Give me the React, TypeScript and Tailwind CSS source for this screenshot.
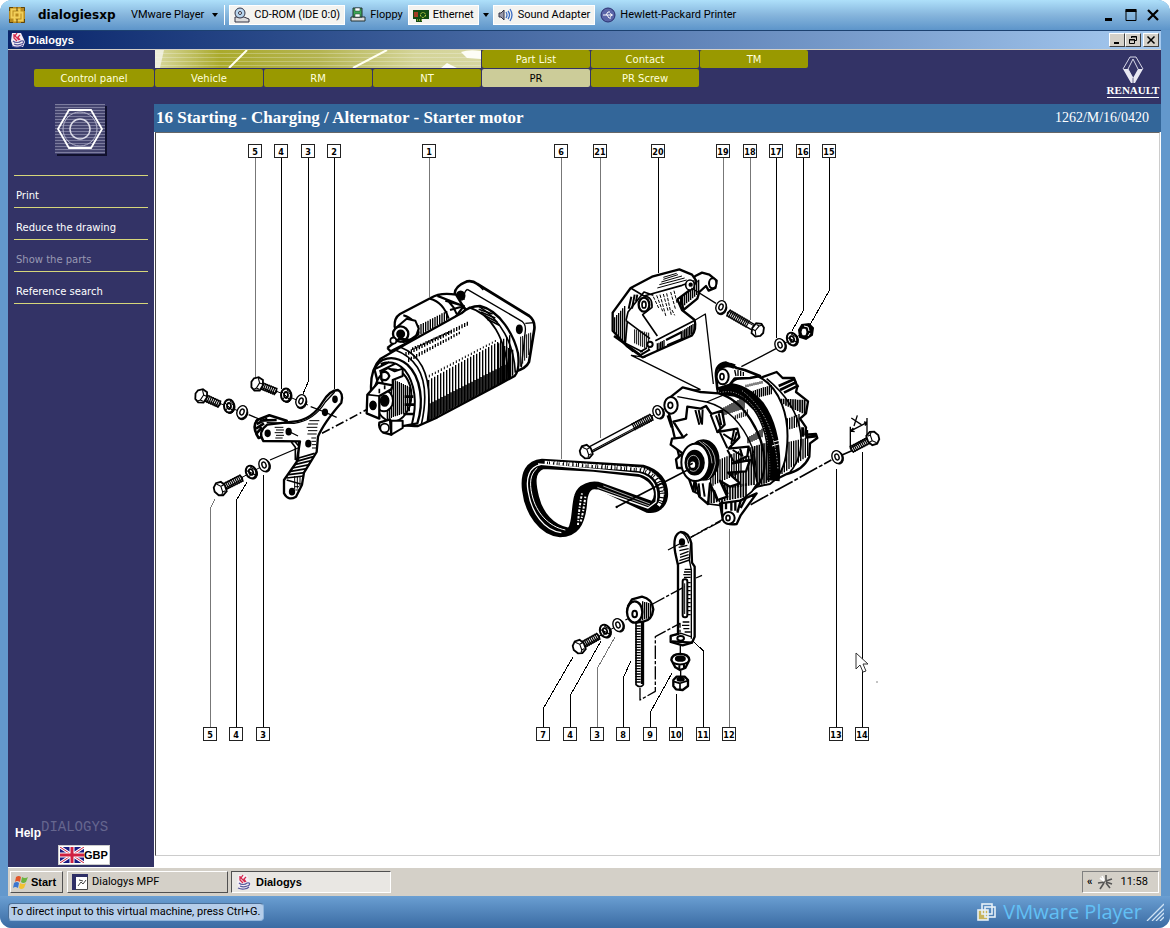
import type { ReactNode } from 'react'

const tahoma = "font-['Roboto',sans-serif] text-[11px] leading-4"
const tahomaBold = "font-['Liberation_Sans',sans-serif] text-[11px] leading-4 font-bold"
const verdana = "font-['DejaVu_Sans',sans-serif] text-[10px] leading-4"

type Callout = { n: number; x: number; line: string; soft?: boolean }

const topCallouts: Callout[] = [
  { n: 5, x: 255, line: 'V380', soft: true },
  { n: 4, x: 281, line: 'V389' },
  { n: 3, x: 308, line: 'V381L303 394' },
  { n: 2, x: 334, line: 'V389' },
  { n: 1, x: 429, line: 'V297', soft: true },
  { n: 6, x: 561, line: 'V459', soft: true },
  { n: 21, x: 600, line: 'V438', soft: true },
  { n: 20, x: 658, line: 'V273' },
  { n: 19, x: 723, line: 'V300', soft: true },
  { n: 18, x: 750, line: 'V320', soft: true },
  { n: 17, x: 776, line: 'V338' },
  { n: 16, x: 803, line: 'V310L792 331' },
  { n: 15, x: 829, line: 'V290L810 325' },
]

const bottomCallouts: Callout[] = [
  { n: 5, x: 210, line: 'V508L215 499', soft: true },
  { n: 4, x: 236, line: 'V500L247 482' },
  { n: 3, x: 263, line: 'V475' },
  { n: 7, x: 543, line: 'V708L573 657' },
  { n: 4, x: 570, line: 'V695L601 641' },
  { n: 3, x: 597, line: 'V668L615 637', soft: true },
  { n: 8, x: 623, line: 'V677L631 661' },
  { n: 9, x: 650, line: 'V712L672 673' },
  { n: 10, x: 676, line: 'V694' },
  { n: 11, x: 703, line: 'V651L693 641' },
  { n: 12, x: 729, line: 'V529', soft: true },
  { n: 13, x: 836, line: 'V469' },
  { n: 14, x: 862, line: 'V452' },
]

// vertical shading strokes between two sloping edges
function hatch(x0: number, x1: number, step: number, a: [number, number], b: [number, number]) {
  let d = ''
  for (let x = x0; x <= x1; x += step) {
    const t = (x - x0) / (x1 - x0)
    d += `M${x} ${Math.round(a[0] + (a[1] - a[0]) * t)}V${Math.round(b[0] + (b[1] - b[0]) * t)}`
  }
  return d
}

function Callouts({ items, y, from }: { items: Callout[]; y: number; from: number }) {
  return (
    <g>
      {items.map(c => (
        <g key={c.x}>
          <path d={`M${c.x + 0.5} ${from}${c.line}`} stroke={c.soft ? '#777' : '#000'} strokeWidth="1" fill="none" shapeRendering="crispEdges" />
          <rect x={c.x - 6.5} y={y - 6.5} width="13" height="13" fill="#fff" stroke="#222" />
          <text x={c.x} y={y + 4} textAnchor="middle" className="font-['DejaVu_Sans_Condensed',sans-serif] text-[9px] font-bold" fill="#000" stroke="none">{c.n}</text>
        </g>
      ))}
    </g>
  )
}

function Bolt({ x, y, a, len, thread = len }: { x: number; y: number; a: number; len: number; thread?: number }) {
  return (
    <g transform={`translate(${x} ${y}) rotate(${a})`} fill="#fff" stroke="#000">
      <path d={`M3 -3H${len}l1 3l-1 3H3z`} strokeWidth="1.4" />
      <path d={hatch(len - thread + 6, len, 2, [-4, -4], [4, 4])} strokeWidth="1.2" />
      <path d={`M4 1.6H${len}`} strokeWidth="1" />
      <path d="M-5 -4L-1 -7L4 -6L6 -1L5 5L0 7L-4 5L-6 0z" strokeWidth="1.8" />
      <path d="M-1 -6L2 -2L1 4L-1 6M2 -2L5 -2M1 4L4 4" strokeWidth="1.1" fill="none" />
    </g>
  )
}

function Washer({ x, y, lock, a = 0 }: { x: number; y: number; lock?: boolean; a?: number }) {
  return (
    <g transform={`translate(${x} ${y}) rotate(${a})`} stroke="#000" fill="#fff">
      <ellipse cx="1" cy="1" rx="5" ry="6.5" fill="#000" strokeWidth="1" />
      <ellipse rx="5" ry="6.5" strokeWidth={lock ? 2 : 1.4} />
      <ellipse rx="2" ry="3" strokeWidth={lock ? 1.8 : 1.4} />
      {lock && <path d="M-4 -3L3 4M-3 4L0 0M1 -5L4 -1" strokeWidth="1" />}
    </g>
  )
}

function Starter() {
  return (
    <g transform="translate(350 270) scale(.33333)" stroke="#000" fill="#fff" strokeWidth="5" strokeLinejoin="round">
      {/* mounting flange */}
      <path d="M316 84C308 60 322 46 352 34Q368 31 382 42L538 138Q556 152 553 178L537 276Q528 296 496 304L420 200z" strokeWidth="8" />
      <path d="M352 58L516 154Q528 164 526 182L514 292M352 58Q340 66 342 90M382 42L400 60M526 160L552 158" fill="none" strokeWidth="4" />
      <path d={hatch(512, 546, 6, [200, 186], [290, 240])} strokeWidth="3" />
      <ellipse cx="332" cy="77" rx="12" ry="13" fill="#000" />
      <ellipse cx="508" cy="178" rx="8" ry="12" fill="#000" />
      {/* solenoid */}
      <path d="M134 170Q132 144 150 132L242 84Q270 66 318 74L340 110L310 150L190 214L150 214z" strokeWidth="7" />
      <path d="M240 86Q280 96 296 146M262 78Q306 90 320 132M160 136Q198 146 206 190M264 78L330 104M286 92L342 108L300 120" fill="none" strokeWidth="6" />
      <path d={hatch(206, 292, 7, [166, 122], [196, 150])} strokeWidth="4" />
      <path d="M140 172L170 146L196 152L206 176L196 204L160 216z" strokeWidth="6" />
      <circle cx="152" cy="192" r="23" strokeWidth="7" />
      <circle cx="152" cy="192" r="11" fill="#000" />
      <path d="M112 234L148 206L180 210L206 192M112 234l10 10l50 -26" strokeWidth="7" fill="none" />
      <circle cx="130" cy="212" r="9" />
      {/* yoke */}
      <path d="M64 372C60 330 68 290 92 266L168 222L334 130Q356 108 390 108C450 122 492 196 504 250Q510 300 494 318L450 342L262 442L204 468Q150 470 130 450z" strokeWidth="7" />
      <path d="M152 232C222 260 250 330 232 456M136 240C210 268 242 340 214 464M356 112C420 130 470 200 476 326M388 110C452 150 492 220 496 308" fill="none" strokeWidth="5" />
      <path d={hatch(236, 486, 9, [330, 192], [452, 322])} strokeWidth="4" />
      <path d={hatch(240, 480, 9, [400, 276], [450, 324])} strokeWidth="5" />
      <path d={hatch(446, 490, 6, [220, 240], [344, 316])} strokeWidth="4" />
      <path d={hatch(168, 358, 8, [246, 152], [258, 164])} strokeWidth="4" />
      <path d={hatch(176, 330, 8, [264, 184], [276, 192])} strokeWidth="4" />
      <path d={hatch(188, 300, 8, [232, 182], [240, 188])} strokeWidth="4" />
      <path d={hatch(238, 440, 9, [314, 208], [322, 214])} strokeWidth="3" />
      <path d="M386 118l42 14M392 126l44 18M402 136l40 20M412 148l36 18" strokeWidth="5" />
      {/* drive end */}
      <path d="M74 300C84 264 130 250 172 284C214 322 222 400 202 460L150 470L112 450z" strokeWidth="7" />
      <path d="M92 282Q130 266 164 300C196 340 202 400 186 462M78 296l40 -20M88 304l50 -24" fill="none" strokeWidth="6" />
      <ellipse cx="128" cy="376" rx="56" ry="78" strokeWidth="6" />
      <path d={hatch(112, 178, 6, [320, 350], [448, 424])} strokeWidth="4" />
      <path d="M92 308l22 -14l20 10l24 -8v22l-30 12v22l-30 -10z" strokeWidth="6" />
      <path d="M94 308Q112 300 118 318Q112 336 94 328z" strokeWidth="7" />
      <ellipse cx="102" cy="392" rx="27" ry="32" strokeWidth="6" />
      <ellipse cx="104" cy="392" rx="12" ry="16" fill="#000" />
      <path d="M52 374L84 338L128 346L124 358L88 378V446L50 430z" strokeWidth="7" />
      <path d="M52 374L88 378M88 356v14M104 346v12" strokeWidth="5" />
      <ellipse cx="69" cy="406" rx="9" ry="12" fill="#000" />
      <path d="M88 458L120 448L124 494L100 488Q84 474 88 458z" strokeWidth="7" />
      <path d="M124 452h34v22l-34 20z" strokeWidth="6" />
      <circle cx="104" cy="474" r="13" strokeWidth="5" />
      <path d="M164 380h26M164 404h28M160 432h30" strokeWidth="8" />
    </g>
  )
}

function Bracket() {
  return (
    <g transform="translate(180 370) scale(.33333)" stroke="#000" fill="#fff" strokeWidth="5" strokeLinejoin="round">
      <path d="M236 204Q214 170 232 150L268 136L320 152L300 180z" strokeWidth="8" />
      <path d="M230 162L262 146M228 176L252 160M230 190L246 172M240 152L290 150" strokeWidth="8" />
      <path d="M334 216L346 232V270M346 216l10 12v40" strokeWidth="5" fill="none" />
      <path d="M250 213Q232 186 262 164L340 155Q396 150 428 96Q450 60 474 60Q492 70 484 98Q430 160 414 200L410 246L372 308L366 344L348 380Q324 394 312 370V330L350 276L360 214z" strokeWidth="7" />
      <path d="M260 158L342 160Q402 152 436 96L464 66M356 214V270M320 330L362 342" strokeWidth="4" fill="none" />
      <path d="M356 264L404 250M350 274L400 260M344 284L394 272M338 294L388 284M332 304L380 296M326 314L374 308M320 324L370 318" strokeWidth="5" fill="none" />
      <path d="M284 172h26M288 180h24M284 188h26M288 196h24M286 204h22M388 152h30M384 162h30M380 172h32M384 182h28M382 192h28M394 204h14M394 214h14M396 224h12M396 234h12M344 350h14M346 360h12" strokeWidth="3" />
      <path d="M344 318v40M352 320v36M360 320v28" strokeWidth="3" />
      <g fill="#000">
        <ellipse cx="263" cy="190" rx="7" ry="9" />
        <ellipse cx="326" cy="185" rx="7" ry="9" />
        <ellipse cx="385" cy="221" rx="7" ry="9" />
        <ellipse cx="465" cy="88" rx="6" ry="9" />
        <ellipse cx="435" cy="127" rx="7" ry="9" />
        <ellipse cx="336" cy="365" rx="7" ry="9" />
      </g>
      <path d="M392 110l42 16l36 16M330 186l24 12M206 134l34 14M270 270l84 -36" strokeWidth="4" fill="none" />
      <path d="M426 190L562 118" strokeWidth="5" strokeDasharray="26 8 5 8" />
    </g>
  )
}

function Belt() {
  return (
    <g transform="translate(510 400) scale(.33333)" stroke="#000" fill="none" strokeLinejoin="round">
      <path d="M96 180C50 184 34 220 40 270C48 340 90 402 150 408C196 408 224 380 228 300C232 270 244 256 270 268L410 334C440 340 466 322 470 290C474 240 444 210 400 198Z" fill="#000" strokeWidth="8" />
      <path d="M100 204C70 216 74 250 84 290C96 340 130 378 176 386C190 370 186 320 196 286C204 256 244 240 276 252L426 306C446 280 430 244 390 228L250 212Z" fill="#fff" strokeWidth="6" />
      <path d="M92 194C56 200 48 236 54 272C64 340 104 392 154 398" stroke="#fff" strokeWidth="4" />
      <path d="M82 204C60 222 58 250 66 284C78 338 116 380 166 390" stroke="#fff" strokeWidth="3" />
      <path d="M84 192L386 220C428 230 446 262 438 306L414 324L262 270" stroke="#fff" strokeWidth="4" />
      <path d="M262 262L418 318M280 258L420 312" stroke="#fff" strokeWidth="2" />
      <path d="M104 188L390 208Q450 222 456 280Q456 304 444 318" stroke="#fff" strokeWidth="11" strokeDasharray="7 3 3 3 9 4" />
      <path d="M110 184L400 204Q460 226 462 284" stroke="#fff" strokeWidth="3" strokeDasharray="3 6 5 4" />
      <path d="M216 280Q206 330 204 376M226 290Q220 336 212 366" stroke="#fff" strokeWidth="6" strokeDasharray="4 5 7 4" />
      <path d="M318 322L540 206" strokeWidth="5" />
      <circle cx="320" cy="321" r="3" fill="#000" />
    </g>
  )
}

function Cover() {
  return (
    <g transform="translate(600 260) scale(.33333)" stroke="#000" fill="#fff" strokeWidth="5" strokeLinejoin="round">
      <path d="M240 100L286 48L306 38L328 44L350 62L346 84L326 92L318 78L298 96L292 116L250 150z" strokeWidth="7" />
      <ellipse cx="338" cy="70" rx="11" ry="15" strokeWidth="6" />
      <path d={hatch(242, 300, 6, [104, 56], [146, 96])} strokeWidth="4" />
      <path d="M38 212V158L92 84L156 50L238 28L276 44L290 64L270 90L232 118L246 150L284 180Q290 208 276 226L164 276L128 292L80 258z" strokeWidth="7" />
      <path d="M92 84L132 108L246 76L284 62M78 182L84 156L132 96L160 106M78 182L150 236M132 108Q158 110 156 142L128 164L172 228M82 182L76 250L128 276M166 242L282 182" fill="none" strokeWidth="5" />
      <path d={hatch(44, 76, 6, [172, 136], [222, 252])} strokeWidth="4" />
      <path d={hatch(104, 146, 6, [208, 218], [250, 270])} strokeWidth="3" />
      <path d="M190 58l44 -14M184 66l62 -18M178 74l76 -20M172 84l88 -24M190 52l40 -12" strokeWidth="3" />
      <path d="M160 110l16 34M170 106l18 48M180 104l18 66M190 102l14 50M200 100l14 66M212 96l14 50M222 92l10 40M216 150l8 16" strokeWidth="3" strokeDasharray="10 4" />
      <path d="M94 110l-8 36M104 104l-8 42M112 104l-4 20" strokeWidth="6" />
      <ellipse cx="132" cy="134" rx="16" ry="21" strokeWidth="7" />
      <ellipse cx="132" cy="134" rx="6" ry="10" />
      <ellipse cx="270" cy="75" rx="13" ry="15" strokeWidth="5" />
      <circle cx="272" cy="74" r="4" fill="#000" />
      <circle cx="150" cy="253" r="8" strokeWidth="6" />
      <path d={hatch(172, 192, 5, [250, 240], [272, 262])} strokeWidth="4" />
      <path d={hatch(244, 282, 5, [214, 190], [240, 218])} strokeWidth="4" />
      <path d="M198 240L246 216M202 256L250 236M42 228L120 284M50 228L100 274" strokeWidth="7" />
      <path d="M120 276l20 -12M120 286l30 -18" strokeWidth="6" />
      {/* leader lines down to the alternator */}
      <path d="M286 180L316 162L340 372M136 292L94 286L300 388L270 392M274 84L348 130M424 320L528 266" fill="none" strokeWidth="4" />
    </g>
  )
}

function Alternator() {
  return (
    <g transform="translate(640 350) scale(.33333)" stroke="#000" fill="#fff" strokeWidth="5" strokeLinejoin="round">
      {/* rear cover */}
      <path d="M360 84L410 66L428 84L462 84L472 110L468 126L504 154L498 190L480 206L498 232L496 254L528 252L532 264L510 280L508 320Q490 360 440 372L380 402L330 240z" strokeWidth="7" />
      <path d="M416 108l46 -20M420 120l50 -24M432 128l44 -22" strokeWidth="8" />
      <path d={hatch(424, 500, 7, [146, 150], [160, 196])} strokeWidth="5" />
      <path d={hatch(414, 482, 7, [216, 190], [248, 228])} strokeWidth="4" />
      <path d={hatch(426, 506, 7, [280, 262], [372, 316])} strokeWidth="4" />
      <path d="M488 232v28M500 240v24M496 262l34 -4" strokeWidth="9" />
      <path d="M380 86Q470 160 482 250Q490 320 450 366" fill="none" strokeWidth="5" />
      {/* stator */}
      <path d="M232 118L300 82L352 78C420 110 452 200 440 300Q434 370 390 402L350 410L250 300z" strokeWidth="6" />
      <path d={hatch(316, 396, 6, [130, 104], [152, 132])} strokeWidth="4" />
      <path d={hatch(318, 370, 6, [104, 92], [112, 100])} strokeWidth="3" />
      <path d="M236 122Q300 104 356 170Q412 250 400 392" fill="none" strokeWidth="38" />
      <path d="M240 128Q296 112 346 178Q396 256 388 390" fill="none" stroke="#fff" strokeWidth="2" strokeDasharray="3 5" />
      <path d="M306 122Q404 196 414 360" fill="none" stroke="#fff" strokeWidth="2" strokeDasharray="4 5" />
      <path d="M396 288l26 -8M400 276l28 -8" stroke="#fff" strokeWidth="3" />
      {/* front bracket */}
      <path d="M78 152L128 112L182 126L236 130C310 150 372 250 374 340Q372 396 340 418L300 452L240 456L120 330z" strokeWidth="7" />
      <path d="M112 140L200 156Q290 180 336 290Q350 330 350 400M200 156L262 130" fill="none" strokeWidth="4" />
      <path d={hatch(252, 312, 6, [172, 140], [196, 176])} strokeWidth="4" />
      <path d={hatch(286, 326, 6, [196, 176], [208, 196])} strokeWidth="3" />
      <path d={hatch(324, 366, 6, [262, 236], [280, 262])} strokeWidth="4" />
      <path d={hatch(330, 386, 7, [292, 276], [416, 396])} strokeWidth="5" />
      <ellipse cx="93" cy="166" rx="20" ry="25" strokeWidth="6" />
      <ellipse cx="91" cy="166" rx="7" ry="9" />
      <path d="M84 196L96 232" strokeWidth="9" />
      {/* top ear */}
      <path d="M228 78Q226 42 258 38L290 54L314 60L360 78L330 84L284 86L270 104L232 116z" strokeWidth="8" />
      <path d="M234 58Q256 36 284 50" strokeWidth="14" fill="none" />
      <ellipse cx="248" cy="80" rx="18" ry="23" strokeWidth="6" />
      <ellipse cx="246" cy="80" rx="6" ry="9" />
      <path d="M284 60l4 18M294 60v18M302 62v16M310 66v12" strokeWidth="4" />
      {/* fan */}
      <path d="M150 390L160 424L190 440L206 462L240 466L300 454L336 424L352 400L330 300L200 330z" strokeWidth="5" />
      <path d={hatch(166, 348, 8, [370, 310], [430, 404])} strokeWidth="5" />
      <path d={hatch(206, 320, 8, [410, 400], [462, 440])} strokeWidth="5" />
      <path d="M100 215L138 206L142 170L182 176L198 168L214 192L246 182L254 224L232 246L292 236L298 262L266 296L326 290L322 318L278 340L330 330L318 364L264 368L300 400L270 410L240 392L262 440L232 450L210 400L204 462L178 440L164 388L160 424L136 354L112 354L108 328L128 310L92 284L96 266L130 262z" strokeWidth="7" />
      <path d="M166 180l12 44M176 180l8 40M188 178l-2 46M228 196l14 40M236 190l8 36M212 194l20 52M250 252l30 20M240 248l22 46M282 240l-8 42M290 246l-8 30M278 300l30 18M300 296l8 24M130 262l12 -10M262 300l20 36M176 400l4 38M188 400l6 40M222 420l10 26M244 398l20 34" strokeWidth="6" />
      <path d={hatch(212, 306, 7, [340, 300], [410, 366])} strokeWidth="4" />
      {/* pulley */}
      <ellipse cx="190" cy="330" rx="46" ry="60" fill="#000" />
      <path d="M188 276Q226 296 226 340Q220 372 204 388M178 274Q214 296 216 340" fill="none" stroke="#fff" strokeWidth="2" />
      <ellipse cx="166" cy="337" rx="42" ry="56" strokeWidth="6" />
      <ellipse cx="164" cy="338" rx="28" ry="36" strokeWidth="5" fill="#000" />
      <ellipse cx="160" cy="340" rx="18" ry="24" fill="none" stroke="#fff" strokeWidth="2" />
      <ellipse cx="158" cy="344" rx="10" ry="12" />
      {/* lower lug */}
      <path d="M240 460L248 506Q260 528 290 522L302 496L350 430L300 452z" strokeWidth="7" />
      <path d="M246 452v38M258 458v20M274 456v26M286 454v28M302 452l-10 36M320 440l-18 34" strokeWidth="7" />
      <ellipse cx="266" cy="504" rx="18" ry="18" strokeWidth="6" />
      <ellipse cx="264" cy="504" rx="6" ry="8" />
      <path d="M150 344L158 340" strokeWidth="5" />
      <path d="M332 464L574 330M594 320L650 296" strokeWidth="5" strokeDasharray="60 6 12 6" fill="none" />
      <path d="M248 508L152 562" strokeWidth="4" strokeDasharray="26 8 6 8" />
      {/* dimension arrow */}
      <path d="M631 230V296M681 204V262M634 242L680 218M640 234l-8 9l12 2M672 216l9 2l-6 9M634 204l30 20M652 196l-10 32" fill="none" strokeWidth="4" />
    </g>
  )
}

function Tensioner() {
  return (
    <g transform="translate(520 520) scale(.33333)" stroke="#000" fill="#fff" strokeWidth="5" strokeLinejoin="round">
      <path d="M466 100Q456 44 482 36Q506 36 514 70L516 128L524 140V350L516 368L488 376L452 366V348L474 342V136z" strokeWidth="7" />
      <path d="M474 132L508 120L512 70M508 120L514 150V356M452 348L484 340L512 350M482 36Q500 44 506 70" fill="none" strokeWidth="4" />
      <path d="M480 104l26 -10M480 112l26 -8M478 122l30 -10M476 82l26 -6M478 92l28 -6M494 148h20M492 156h20M490 164h22M492 172h20M504 188h8M504 200h8M504 212h8M504 224h8M504 236h8M504 248h8M504 260h8M504 272h8M504 284h8M488 306h20M486 316h22M490 326h18M494 336h18" strokeWidth="4" />
      <rect x="488" y="178" width="14" height="114" rx="6" strokeWidth="6" />
      <path d="M494 190v92" strokeWidth="3" />
      <ellipse cx="486" cy="66" rx="7" ry="9" fill="#000" />
      <ellipse cx="482" cy="355" rx="10" ry="7" strokeWidth="6" />
      <path d="M456 364l60 4" strokeWidth="7" />
      <path d="M444 90L478 72M512 52L606 2M316 300L346 286M398 252L494 200M528 174L546 166M360 504V540L406 514V350L480 310V338" fill="none" strokeWidth="4" strokeDasharray="40 6 10 6" />
      {/* eye bolt */}
      <path d="M348 300h22v194q-10 12 -22 0z" strokeWidth="5" />
      <path d="M348 318h14M346 326h16M346 334h16M346 342h16M346 350h16M346 358h16M346 366h16M346 374h16M346 382h16M346 390h16M346 398h16M346 406h16M346 414h16M346 422h16M346 430h16M346 438h16M346 446h16M346 454h16M346 462h16M346 470h16M346 478h16M346 486h16" strokeWidth="4" />
      <path d="M366 304v188" strokeWidth="7" />
      <path d="M324 258L336 238L366 230Q396 236 400 268Q396 300 372 304L350 308z" strokeWidth="7" />
      <ellipse cx="344" cy="276" rx="23" ry="32" strokeWidth="7" />
      <ellipse cx="344" cy="282" rx="7" ry="10" strokeWidth="6" />
      <path d={hatch(368, 396, 6, [244, 252], [300, 290])} strokeWidth="4" />
      {/* nuts */}
      <path d="M481 376v32M482 452v16" strokeWidth="4" />
      <path d="M454 420Q456 402 480 402Q506 402 508 420L496 444L480 450L466 442z" strokeWidth="7" />
      <path d="M458 428Q482 440 506 426M478 436v12M492 434v10" strokeWidth="6" fill="none" />
      <ellipse cx="481" cy="416" rx="14" ry="7" fill="#000" />
      <path d="M460 480L470 470H494L504 480V498L488 510L468 508L460 498z" strokeWidth="7" />
      <path d="M460 484L480 490L504 482M480 490V510" strokeWidth="5" />
      <ellipse cx="482" cy="478" rx="10" ry="5" fill="#000" />
    </g>
  )
}

function ExplodedView() {
  return (
    <svg viewBox="156 133 740 620" width="740" height="620" role="img" aria-label="Alternator and starter motor" className="block shrink-0">
      <Callouts items={topCallouts} y={151} from={158} />
      <Callouts items={bottomCallouts} y={734} from={727} />
      <path d="M219 403L246 414M276 391L308 405M241 478L268 463M650 417L664 409M776 348L800 335M598 637L620 624" stroke="#000" strokeWidth="1" />
      <Starter />
      <Bracket />
      <Cover />
      <Alternator />
      <Belt />
      <Tensioner />
      <Bolt x={201} y={396} a={24} len={20} />
      <Bolt x={257} y={384} a={22} len={20} />
      <Bolt x={220} y={489} a={-27} len={24} />
      <Bolt x={586} y={452} a={-28} len={74} thread={26} />
      <Bolt x={758} y={330} a={-150} len={34} thread={28} />
      <Bolt x={579} y={647} a={-29} len={22} />
      <Bolt x={873} y={438} a={152} len={24} />
      <Washer x={229} y={406} lock />
      <Washer x={242} y={412} a={20} />
      <Washer x={286} y={395} lock />
      <Washer x={301} y={401} a={20} />
      <Washer x={251} y={472} lock a={-20} />
      <Washer x={264} y={465} a={-20} />
      <Washer x={658} y={412} a={-20} />
      <Washer x={721} y={307} a={20} />
      <Washer x={780} y={345} a={-20} />
      <Washer x={792} y={339} lock a={-20} />
      <Washer x={837} y={457} a={-20} />
      <Washer x={605} y={631} lock a={-20} />
      <Washer x={618} y={625} a={-20} />
      <g stroke="#000" fill="#fff" strokeWidth="2">
        <path d="M799 330L802 325L809 324L813 328L812 335L806 339L800 337z" fill="#000" />
        <ellipse cx="804" cy="332" rx="3" ry="4" strokeWidth="1" />
        <path d="M804 326l4 1l1 4M808 336l2 -3" stroke="#fff" strokeWidth="1" fill="none" />
      </g>
      <path d="M856 653v16l4 -4l3 7l3 -1l-3 -7h5z" fill="#fff" stroke="#333" strokeWidth="1" />
      <path d="M876 682h2" stroke="#888" />
    </svg>
  )
}

function JavaIcon() {
  return (
    <svg viewBox="0 0 16 16" className="size-4 shrink-0" fill="none">
      <path d="M2 1h9l4 9l-2 5H3L1 9z" fill="#f4eef4" />
      <path d="M4 2v4l3 3M7 1L5 4l4 4M10 3L8 5l2 3" stroke="#d5294d" strokeWidth="1.3" />
      <path d="M3 9c2 2 6 2 8 0M4 12c2 1 5 1 7 0M2 14c4 2 9 1 11-1M11 9c4-1 3 3 0 3" stroke="#56569c" strokeWidth="1.2" />
    </svg>
  )
}

function PlayerIcon() {
  return (
    <svg viewBox="0 0 18 18" className="size-[18px] shrink-0" fill="none" stroke="#5c4510">
      <path d="M1 1h16v16H1z" fill="#b98a1e" stroke="none" />
      <path d="M3.500 3.500h8v8h-8zM6.500 6.500h8v8h-8z" stroke="#f2cf5a" strokeWidth="2" />
      <path d="M1.500 5V1.500H5M13 1.500h3.500V5M1.500 13v3.500H5M13 16.500h3.500V13M9 1v4M9 13v4" />
    </svg>
  )
}

function BoxesLogo() {
  return (
    <svg viewBox="0 0 20 20" className="ml-auto size-5" fill="none" stroke="#e6f0f8" strokeWidth="1.6">
      <rect x="1" y="8" width="10" height="10" fill="#c8b45c" />
      <rect x="5" y="2" width="10" height="10" />
      <rect x="8" y="5" width="10" height="10" />
    </svg>
  )
}

function DeviceButton({ label, active, children }: { label: string; active?: boolean; children: ReactNode }) {
  return (
    <button className={`flex h-5 items-center gap-1 whitespace-nowrap ${active ? 'border border-white bg-[#f3f3f0] px-1' : 'px-1'}`}>
      {children}
      {label}
    </button>
  )
}

function PlayerBar() {
  return (
    <header className={`flex h-[30px] items-center bg-linear-to-b from-[#aee0fa] via-[#86b5dc] to-[#5d95ca] px-2 text-black ${tahoma}`}>
      <PlayerIcon />
      <h1 className="ml-3 w-[93px] font-['DejaVu_Sans',sans-serif] text-xs font-bold">dialogiesxp</h1>
      <button className="flex items-center gap-2 whitespace-nowrap">
        VMware Player
        <svg viewBox="0 0 6 4" className="h-1 w-1.5"><path d="M0 0h6L3 4z" /></svg>
      </button>
      <div className="mr-1 ml-1.5 h-5 w-px bg-white" />
      <div className="flex gap-px">
        <DeviceButton label="CD-ROM (IDE 0:0)" active>
          <svg viewBox="0 0 16 16" className="size-4" stroke="#334">
            <path d="M1 10h9l5 2v3H1z" fill="#ddd" />
            <circle cx="6" cy="6" r="5" fill="#b9d6ee" />
            <circle cx="6" cy="6" r="1.5" fill="#fff" />
          </svg>
        </DeviceButton>
        <DeviceButton label="Floppy">
          <svg viewBox="0 0 16 16" className="size-4" stroke="#233">
            <path d="M1 10h14v4H1z" fill="#ddd" />
            <path d="M3 1h9v9H3z" fill="#3da556" />
            <path d="M5 1h5v3H5zM5 7h5v3H5z" fill="#fff" strokeWidth=".5" />
          </svg>
        </DeviceButton>
        <DeviceButton label="Ethernet" active>
          <svg viewBox="0 0 16 16" className="size-4">
            <path d="M0 3h16v9H9v3H3v-3H0z" fill="#124a12" />
            <path d="M1 5h4v5H1z" fill="#a33c22" />
            <circle cx="10" cy="8" r="2.5" fill="none" stroke="#d5e04c" strokeDasharray="2 1" />
            <path d="M4 13h5" stroke="#d5e04c" strokeDasharray="1 1" />
          </svg>
        </DeviceButton>
        <button aria-label="Ethernet options" className="flex h-5 w-3 items-center justify-center">
          <svg viewBox="0 0 6 4" className="h-1 w-1.5"><path d="M0 0h6L3 4z" /></svg>
        </button>
        <DeviceButton label="Sound Adapter" active>
          <svg viewBox="0 0 16 16" className="size-4" fill="none" stroke="#3d6ec4">
            <path d="M1 6h2l3-3v10l-3-3H1z" fill="#99a" stroke="#334" />
            <path d="M8 5q2 3 0 6M10 4q3 4 0 8M12 2q4 6 0 12" strokeWidth="1.3" />
          </svg>
        </DeviceButton>
        <DeviceButton label="Hewlett-Packard Printer">
          <svg viewBox="0 0 16 16" className="size-4" fill="none" stroke="#fff">
            <circle cx="8" cy="8" r="7" fill="#5a65a8" stroke="#2a3070" />
            <path d="M3 8h9M6 8l2-3h2M7 8l2 3h2M10 6.500l2.500 1.500l-2.500 1.500" />
          </svg>
        </DeviceButton>
      </div>
      <div className="ml-auto flex gap-1">
        <button aria-label="Minimize" className="p-0.5"><svg viewBox="0 0 14 14" className="size-3.5"><path d="M3 10h7v3H3z" /></svg></button>
        <button aria-label="Maximize" className="p-0.5"><svg viewBox="0 0 14 14" className="size-3.5" fill="none" stroke="#000"><path d="M2 2.500h10v10H2z" /><path d="M1.500 2.500h11" strokeWidth="3" /></svg></button>
        <button aria-label="Close" className="p-0.5"><svg viewBox="0 0 14 14" className="size-3.5" stroke="#000" strokeWidth="2.2"><path d="M2 2l10 10M12 2L2 12" /></svg></button>
      </div>
    </header>
  )
}

const captionButton = 'flex h-3.5 w-4 items-center justify-center border border-t-white border-l-white border-r-[#404040] border-b-[#404040] bg-[#d4d0c8]'

function TitleBar() {
  return (
    <div className="flex h-[19px] items-center gap-0.5 border-b border-[#d4d0c8] bg-linear-to-r from-[#0a246a] to-[#a6caf0] px-0.5">
      <JavaIcon />
      <h2 className={`text-white ${tahomaBold}`}>Dialogys</h2>
      <div className="ml-auto flex">
        <button aria-label="Minimize window" className={captionButton}><svg viewBox="0 0 10 10" className="size-2.5"><path d="M2 7h5v2H2z" /></svg></button>
        <button aria-label="Restore window" className={captionButton}><svg viewBox="0 0 10 10" className="size-2.5" fill="none" stroke="#000"><path d="M3.500 3V1.500h5v4H7M1.500 4.500h5v4h-5zM3 2h6M1 5h6" /></svg></button>
        <button aria-label="Close window" className={`ml-0.5 ${captionButton}`}><svg viewBox="0 0 10 10" className="size-2.5" stroke="#000" strokeWidth="1.5"><path d="M1.500 1.500l7 7M8.500 1.500l-7 7" /></svg></button>
      </div>
    </div>
  )
}

const tab = 'h-[18px] rounded-xs bg-[#999900] pt-0.5 text-center text-[#ffffdd]'

function NavTabs() {
  return (
    <nav className={`ml-[26px] grid grid-cols-[120px_repeat(6,108px)] gap-px self-start ${verdana}`}>
      <svg viewBox="0 0 326 18" preserveAspectRatio="none" className="col-span-3 col-start-2 h-[18px] w-full">
        <defs>
          <linearGradient id="banner">
            <stop offset="0" stopColor="#d9d9a0" />
            <stop offset=".2" stopColor="#aaaa2c" />
            <stop offset=".5" stopColor="#b4b450" />
            <stop offset=".8" stopColor="#d4d498" />
            <stop offset="1" stopColor="#d6d6a0" />
          </linearGradient>
        </defs>
        <rect width="326" height="18" fill="url(#banner)" />
        <path d="M0 3.500h326M0 7.500h326M0 11.500h326M0 15.500h326" stroke="#fff" opacity=".25" />
        <path d="M0 0h9L5 18H0z" fill="#f4f4ea" opacity=".8" />
        <path d="M92 0L74 18M232 0L198 18" stroke="#fffff0" strokeWidth="2" />
        <path d="M306 2q8 -3 20 -1v8l-14 -1zM286 18l6 -5l10 5z" fill="#fdfdf6" />
      </svg>
      <button className={tab}>Part List</button>
      <button className={tab}>Contact</button>
      <button className={tab}>TM</button>
      <button className={`col-start-1 ${tab}`}>Control panel</button>
      <button className={tab}>Vehicle</button>
      <button className={tab}>RM</button>
      <button className={tab}>NT</button>
      <button aria-current="page" className="h-[18px] rounded-xs bg-[#cccc99] pt-0.5 text-center text-black">PR</button>
      <button className={tab}>PR Screw</button>
    </nav>
  )
}

function RenaultLogo() {
  return (
    <div className="mt-1.5 mr-px ml-auto flex w-[54px] flex-col items-center text-white">
      <svg viewBox="0 0 22 28" className="h-7 w-[22px]" fill="none" stroke="#d8d8e8">
        <path d="M8 1h6l7 12M8 1L1 13M11 3L6 13l5 9M11 3l5 10" strokeWidth="1" />
        <path d="M1 13h5l5 9l5-9h5l-8 14H9z" fill="#e8e8f2" stroke="none" />
        <path d="M11 22v5" stroke="#333366" strokeWidth=".7" />
      </svg>
      <span className="border-b border-white font-['Liberation_Serif',serif] text-[11px] leading-[13px] font-bold">RENAULT</span>
    </div>
  )
}

const menu = [
  { label: 'Print' },
  { label: 'Reduce the drawing' },
  { label: 'Show the parts', disabled: true },
  { label: 'Reference search' },
]

function Sidebar() {
  return (
    <aside className="flex w-[146px] shrink-0 flex-col bg-[#333366] text-white">
      <svg viewBox="0 0 52 52" className="ml-[47px] size-[52px]" fill="none">
        <path d="M2 2h50v50H2z" fill="#11112e" />
        <path d="M0 0h50v50H0z" fill="#45456f" />
        <path d={Array.from({ length: 17 }, (_, i) => `M0 ${i * 3 + 0.5}h50`).join('')} stroke="#7c7c9e" />
        <path d="M14 6h22l11 19l-11 19H14L3 25z" stroke="#fff" strokeWidth="1.8" />
        <circle cx="25" cy="25" r="17" stroke="#b5b5cc" />
        <circle cx="25" cy="25" r="10" stroke="#dcdce8" strokeWidth="1.5" />
      </svg>
      <ul className={`mx-1.5 mt-[19px] border-t border-t-[#d6d67a] ${verdana}`}>
        {menu.map(m => (
          <li key={m.label} className="border-b border-b-[#d6d67a]">
            <button disabled={m.disabled} className={`h-[31px] w-full pt-2 pl-0.5 text-left ${m.disabled ? 'text-[#9999b3]' : ''}`}>{m.label}</button>
          </li>
        ))}
      </ul>
      <div className="mt-auto ml-[7px] flex items-end">
        <a href="#help" className="font-['Liberation_Sans',sans-serif] text-xs leading-4 font-bold">Help</a>
        <span className="pb-1 font-['Liberation_Mono',monospace] text-sm leading-5 text-[#66668f]">DIALOGYS</span>
      </div>
      <button className="mt-1 mb-0.5 ml-[50px] flex h-5 w-[52px] items-center border border-[#ccc] bg-white p-px font-['Liberation_Sans',sans-serif] text-[11px] font-bold text-black">
        <svg viewBox="0 0 24 16" className="h-4 w-6">
          <rect width="24" height="16" fill="#1a1a80" />
          <path d="M0 0l24 16M24 0L0 16" stroke="#fff" strokeWidth="3" />
          <path d="M0 0l24 16M24 0L0 16" stroke="#d02040" strokeWidth="1" />
          <path d="M12 0v16M0 8h24" stroke="#fff" strokeWidth="5" />
          <path d="M12 0v16M0 8h24" stroke="#d02040" strokeWidth="3" />
        </svg>
        GBP
      </button>
    </aside>
  )
}

const raised = 'border border-t-white border-l-white border-r-[#505050] border-b-[#505050] bg-[#d4d0c8]'

function Taskbar() {
  return (
    <footer className={`flex h-[29px] items-center gap-1 border-t border-white bg-[#d4d0c8] px-0.5 text-black ${tahoma}`}>
      <button className={`flex h-[22px] w-[53px] items-center gap-0.5 px-0.5 ${tahomaBold} ${raised}`}>
        <svg viewBox="0 0 16 16" className="size-4">
          <path d="M3 3q3-2 5 0L7 8Q4 6 2 8z" fill="#e2572b" />
          <path d="M9 3q3 2 6 0l-2 5q-3 2-5 0z" fill="#6cb33f" />
          <path d="M1 9q3-2 5 0l-1 5q-3-2-5 0z" fill="#3b76d0" />
          <path d="M7 9q3 2 6 0l-2 5q-3 2-5 0z" fill="#f2c232" />
        </svg>
        Start
      </button>
      <button className={`flex h-[22px] w-[161px] items-center gap-1 px-1 ${raised}`}>
        <svg viewBox="0 0 16 16" className="size-4" fill="none">
          <path d="M.5 .5h15v15H.5z" fill="#fff" stroke="#444" />
          <path d="M0 0h16v3H0zM0 0h4v16H0z" fill="#2f2f66" />
          <path d="M6 12l3-4l2 2l3-4M7 6l4 1" stroke="#444" />
        </svg>
        Dialogys MPF
      </button>
      <button className={`-ml-px flex h-[22px] w-[160px] items-center gap-1 border border-t-[#505050] border-l-[#505050] border-r-white border-b-white bg-[#e9e7e3] px-1 ${tahomaBold}`}>
        <JavaIcon />
        Dialogys
      </button>
      <div className="ml-auto flex h-[22px] w-[77px] items-center gap-1 border border-t-[#808080] border-l-[#808080] border-r-white border-b-white px-1">
        <span className="font-bold">«</span>
        <svg viewBox="0 0 16 16" className="size-4" strokeWidth="1.6">
          <path d="M9 1v6l6-2M8 8L1 9M7 9l-4 6M9 9l4 5M9 8l6 2" stroke="#555" fill="none" />
          <path d="M5 2l2 4M3 4l4 3" stroke="#fff" />
        </svg>
        <time className="ml-1">11:58</time>
      </div>
    </footer>
  )
}

function StatusBar() {
  return (
    <footer className={`flex h-8 items-center bg-linear-to-b from-[#6b9fd2] to-[#3a6ba3] pr-1.5 pl-2 ${tahoma}`}>
      <p className="rounded-sm border border-t-[#4a6f98] border-l-[#4a6f98] border-r-[#8fb4da] border-b-[#8fb4da] bg-[#b5cde9] px-0.5 text-black">To direct input to this virtual machine, press Ctrl+G.</p>
      <BoxesLogo />
      <span className="ml-1.5 font-['Open_Sans',sans-serif] text-xl leading-6 text-[#62c0f5]">VMware Player</span>
      <svg viewBox="0 0 18 18" className="ml-1 size-[18px]" stroke="#cfe3f5" strokeWidth="1.3">
        <path d="M1 18L18 1M6 18L18 6M10 18l8-8M14 18l4-4" />
      </svg>
    </footer>
  )
}

export default function App() {
  return (
    <div className="flex min-h-screen flex-col overflow-hidden rounded-xl bg-[#6398cc]">
      <PlayerBar />
      <div className="mr-[9px] ml-2 flex flex-1 flex-col border-t border-[#1c4170]">
        <TitleBar />
        <div className="flex h-[54px] bg-[#333366]">
          <NavTabs />
          <RenaultLogo />
        </div>
        <div className="flex flex-1">
          <Sidebar />
          <main className="flex min-w-0 flex-1 flex-col bg-white">
            <div className="flex h-7 items-center justify-between bg-[#336699] pr-3 pl-0.5 font-['Liberation_Serif',serif] text-white">
              <h3 className="text-[17px] font-bold">16 Starting - Charging / Alternator - Starter motor</h3>
              <span className="text-sm">1262/M/16/0420</span>
            </div>
            <div className="mr-px mb-[11px] ml-px flex-1 overflow-hidden border border-t-[#666] border-r-[#ccc] border-b-[#ccc] border-l-[#444]">
              <ExplodedView />
            </div>
          </main>
        </div>
        <Taskbar />
      </div>
      <StatusBar />
    </div>
  )
}
